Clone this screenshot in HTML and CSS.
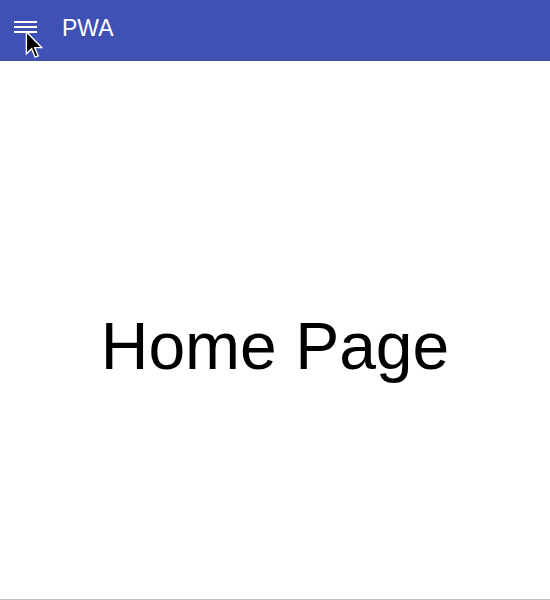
FILE: index.html
```html
<!DOCTYPE html>
<html>
<head>
<meta charset="utf-8">
<link rel="stylesheet" href="styles.css">
</head>
<body>
<div class="app">
  <header class="toolbar">
    <button class="menu-btn" aria-label="menu">
      <span class="bar"></span><span class="bar"></span><span class="bar"></span>
    </button>
    <span class="title">PWA</span>
    <svg class="cursor" width="18" height="27" viewBox="0 0 12 19.5">
      <path d="M0.5 0.5 L0.5 16.5 L4.3 12.8 L6.8 18.8 L9 17.9 L6.5 12 L11.5 12 Z" fill="#000" stroke="#fff" stroke-width="1" stroke-linejoin="miter"/>
    </svg>
  </header>
  <main class="content">
    <h1 class="heading">Home Page</h1>
  </main>
</div>
</body>
</html>
```
FILE: styles.css
```css
html, body {
  margin: 0;
  padding: 0;
  background: #fff;
}
body {
  font-family: "Liberation Sans", Arial, sans-serif;
}
.app {
  height: 600px;
  box-sizing: border-box;
  border-bottom: 1px solid #c4c4c4;
  display: flex;
  flex-direction: column;
}
.toolbar {
  position: relative;
  height: 61px;
  background: #3f51b5;
  display: flex;
  align-items: flex-start;
  flex-shrink: 0;
}
.menu-btn {
  background: none;
  border: 0;
  padding: 0;
  margin-left: 14px;
  margin-top: 21px;
  width: 23px;
  display: flex;
  flex-direction: column;
  gap: 3px;
}
.bar {
  display: block;
  height: 2px;
  width: 23px;
  background: #fff;
}
.title {
  color: #fff;
  font-size: 23px;
  line-height: normal;
  margin-left: 25px;
  margin-top: 15px;
}
.cursor {
  position: absolute;
  left: 25px;
  top: 31px;
}
.content {
  flex: 1;
}
.heading {
  margin: 0;
  padding-top: 247px;
  font-weight: normal;
  font-size: 66px;
  line-height: normal;
  text-align: center;
  color: #000;
}
```
